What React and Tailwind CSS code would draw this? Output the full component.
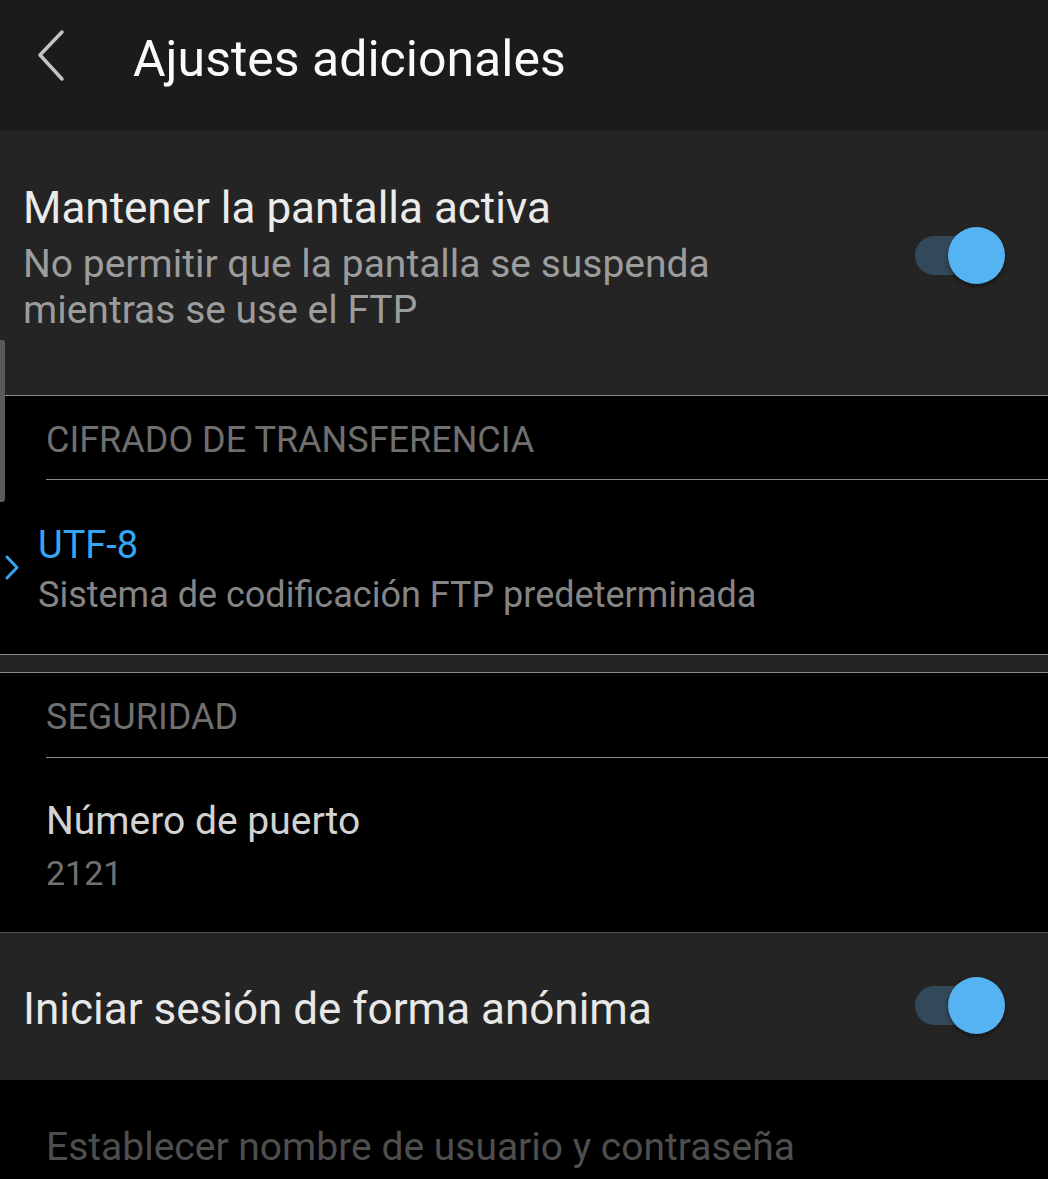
import React, { useState } from "react";

function Toggle({ on, onChange }) {
  return (
    <button
      type="button"
      onClick={onChange}
      className="relative w-[90px] h-[57px] shrink-0"
    >
      <span
        className={`absolute left-0 top-[9px] w-[82px] h-[39px] rounded-full ${
          on ? "bg-[#33495a]" : "bg-[#555555]"
        }`}
      />
      <span
        className={`absolute top-0 w-[57px] h-[57px] rounded-full shadow-[0_2px_4px_rgba(0,0,0,0.5)] ${
          on ? "right-0 bg-[#56b3f1]" : "left-0 bg-[#bdbdbd]"
        }`}
      />
    </button>
  );
}

export default function App() {
  const [screenOn, setScreenOn] = useState(true);
  const [anonymous, setAnonymous] = useState(true);

  return (
    <div
      className="relative w-[1048px] h-[1179px] overflow-hidden bg-black"
      style={{ fontFamily: "Roboto, 'Noto Sans', sans-serif" }}
    >
      {/* Header */}
      <div className="h-[131px] bg-[#1b1b1b] flex items-start">
        <svg
          width="40"
          height="60"
          viewBox="0 0 40 60"
          className="mt-[27px] ml-[30px]"
          fill="none"
        >
          <path
            d="M32 5 L10 28 L32 52"
            stroke="#c4c4c4"
            strokeWidth="3.5"
            strokeLinecap="round"
            strokeLinejoin="round"
          />
        </svg>
        <h1 className="ml-[63px] mt-[29px] text-[50px] leading-[60px] text-[#fafafa]">
          Ajustes adicionales
        </h1>
      </div>

      {/* Keep screen on */}
      <div className="h-[265px] bg-[#242424] border-b border-[#8a8a8a] flex items-start justify-between pl-[23px] pr-[43px]">
        <div className="pt-[51px]">
          <p className="text-[44px] leading-[52px] text-[#ebebeb]">
            Mantener la pantalla activa
          </p>
          <p className="mt-[7px] text-[39px] leading-[46px] text-[#9c9c9c]">
            No permitir que la pantalla se suspenda
            <br />
            mientras se use el FTP
          </p>
        </div>
        <div className="mt-[96px]">
          <Toggle on={screenOn} onChange={() => setScreenOn(!screenOn)} />
        </div>
      </div>

      {/* Transfer encoding */}
      <div className="ml-[46px] h-[84px] border-b border-[#8a8a8a] pt-[22px]">
        <p className="text-[36px] leading-[44px] text-[#6f6f6f]">
          CIFRADO DE TRANSFERENCIA
        </p>
      </div>
      <div className="h-[175px] border-b border-[#8a8a8a] flex items-start">
        <svg
          width="18"
          height="28"
          viewBox="0 0 18 28"
          className="mt-[74px] ml-[2px]"
          fill="none"
        >
          <path
            d="M5 3 L15 13.5 L5 24"
            stroke="#35a6f4"
            strokeWidth="3"
            strokeLinecap="round"
            strokeLinejoin="round"
          />
        </svg>
        <div className="ml-[18px] pt-[42px]">
          <p className="text-[38px] leading-[46px] text-[#35a6f4]">UTF-8</p>
          <p className="mt-[5px] text-[36px] leading-[44px] text-[#858585]">
            Sistema de codificación FTP predeterminada
          </p>
        </div>
      </div>
      <div className="h-[18px] bg-[#242424] border-b border-[#8a8a8a]" />

      {/* Security */}
      <div className="ml-[46px] h-[85px] border-b border-[#8a8a8a] pt-[22px]">
        <p className="text-[36px] leading-[44px] text-[#6f6f6f]">SEGURIDAD</p>
      </div>
      <div className="h-[175px] border-b border-[#555555] pl-[46px] pt-[39px]">
        <p className="text-[39px] leading-[48px] text-[#d2d2d2]">
          Número de puerto
        </p>
        <p className="mt-[6px] text-[34px] leading-[44px] text-[#717171]">
          2121
        </p>
      </div>

      {/* Anonymous login */}
      <div className="h-[147px] bg-[#242424] flex items-start justify-between pl-[23px] pr-[43px]">
        <p className="pt-[50px] text-[44px] leading-[52px] text-[#e8e8e8]">
          Iniciar sesión de forma anónima
        </p>
        <div className="mt-[44px]">
          <Toggle on={anonymous} onChange={() => setAnonymous(!anonymous)} />
        </div>
      </div>

      <div className="pl-[46px] pt-[43px]">
        <p className="text-[39px] leading-[48px] text-[#4e4e4e]">
          Establecer nombre de usuario y contraseña
        </p>
      </div>

      {/* Scroll indicator */}
      <div className="absolute left-0 top-[340px] w-[5px] h-[162px] rounded-r-[3px] bg-[#5a5a5a]" />
    </div>
  );
}
